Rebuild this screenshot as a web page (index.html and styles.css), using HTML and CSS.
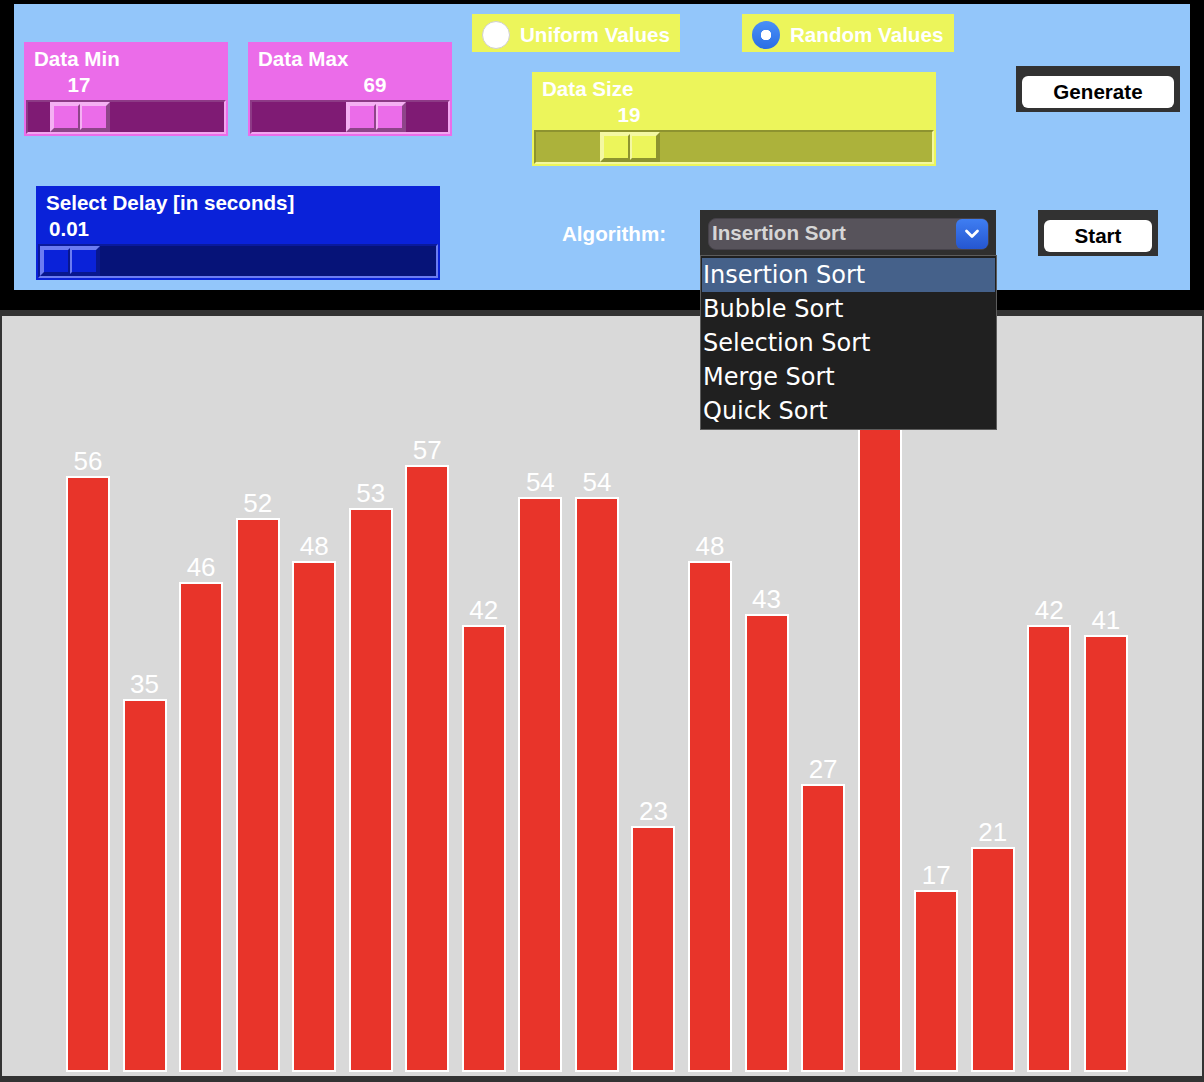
FILE: index.html
```html
<!DOCTYPE html>
<html lang="en">
<head>
<meta charset="utf-8">
<title>Sorting Visualizer</title>
<link rel="stylesheet" href="styles.css">
</head>
<body>
<div class="panel">
  <div class="col col-a">
    <div class="scale-row">
      <div class="scale magenta" style="--pos: 22px">
        <div class="scale-label">Data Min</div>
        <div class="scale-value">17</div>
        <div class="trough narrow"><div class="thumb"><span></span><span></span></div></div>
      </div>
      <div class="scale magenta" style="--pos: 94px">
        <div class="scale-label">Data Max</div>
        <div class="scale-value">69</div>
        <div class="trough narrow"><div class="thumb"><span></span><span></span></div></div>
      </div>
    </div>
    <div class="scale blue delay" style="--pos: 0px">
      <div class="scale-label">Select Delay [in seconds]</div>
      <div class="scale-value">0.01</div>
      <div class="trough wide"><div class="thumb"><span></span><span></span></div></div>
    </div>
  </div>

  <div class="col col-b">
    <div class="radio-row">
      <div class="radio uniform"><span class="dot"></span><span>Uniform Values</span></div>
      <div class="radio random"><span class="dot checked"></span><span>Random Values</span></div>
    </div>
    <div class="scale yellow size" style="--pos: 64px">
      <div class="scale-label">Data Size</div>
      <div class="scale-value">19</div>
      <div class="trough wide"><div class="thumb"><span></span><span></span></div></div>
    </div>
    <div class="algo-row">
      <div class="algo-label">Algorithm:</div>
      <div class="combo-frame">
        <div class="combo">
          <span class="combo-text">Insertion Sort</span>
          <span class="combo-btn"><svg width="16" height="10" viewBox="0 0 16 10"><polyline points="2.5,2 8,7.5 13.5,2" fill="none" stroke="#fff" stroke-width="2.8" stroke-linecap="round" stroke-linejoin="round"/></svg></span>
        </div>
        <ul class="menu">
          <li class="active">Insertion Sort</li>
          <li>Bubble Sort</li>
          <li>Selection Sort</li>
          <li>Merge Sort</li>
          <li>Quick Sort</li>
        </ul>
      </div>
    </div>
  </div>

  <div class="col col-c">
    <div class="btn-frame generate"><div class="btn">Generate</div></div>
    <div class="btn-frame start"><div class="btn">Start</div></div>
  </div>
</div>

<div class="canvas">
  <div class="bars">
    <div class="bar-col"><div class="bar-label">56</div><div class="bar" style="height:596px"></div></div>
    <div class="bar-col"><div class="bar-label">35</div><div class="bar" style="height:373px"></div></div>
    <div class="bar-col"><div class="bar-label">46</div><div class="bar" style="height:490px"></div></div>
    <div class="bar-col"><div class="bar-label">52</div><div class="bar" style="height:554px"></div></div>
    <div class="bar-col"><div class="bar-label">48</div><div class="bar" style="height:511px"></div></div>
    <div class="bar-col"><div class="bar-label">53</div><div class="bar" style="height:564px"></div></div>
    <div class="bar-col"><div class="bar-label">57</div><div class="bar" style="height:607px"></div></div>
    <div class="bar-col"><div class="bar-label">42</div><div class="bar" style="height:447px"></div></div>
    <div class="bar-col"><div class="bar-label">54</div><div class="bar" style="height:575px"></div></div>
    <div class="bar-col"><div class="bar-label">54</div><div class="bar" style="height:575px"></div></div>
    <div class="bar-col"><div class="bar-label">23</div><div class="bar" style="height:246px"></div></div>
    <div class="bar-col"><div class="bar-label">48</div><div class="bar" style="height:511px"></div></div>
    <div class="bar-col"><div class="bar-label">43</div><div class="bar" style="height:458px"></div></div>
    <div class="bar-col"><div class="bar-label">27</div><div class="bar" style="height:288px"></div></div>
    <div class="bar-col"><div class="bar-label">69</div><div class="bar" style="height:734px"></div></div>
    <div class="bar-col"><div class="bar-label">17</div><div class="bar" style="height:182px"></div></div>
    <div class="bar-col"><div class="bar-label">21</div><div class="bar" style="height:225px"></div></div>
    <div class="bar-col"><div class="bar-label">42</div><div class="bar" style="height:447px"></div></div>
    <div class="bar-col"><div class="bar-label">41</div><div class="bar" style="height:437px"></div></div>
  </div>
</div>
</body>
</html>
```

FILE: styles.css
```css
* { box-sizing: border-box; }

html, body {
  margin: 0;
  padding: 0;
  background: #000;
  width: 1204px;
  height: 1082px;
  overflow: hidden;
  font-family: "Liberation Sans", Arial, sans-serif;
}

.panel {
  margin: 4px 14px 0;
  width: 1176px;
  height: 286px;
  background: #93c6fa;
  display: flex;
  gap: 20px;
  padding-left: 10px;
  color: #fff;
  font-weight: bold;
  font-size: 20.6px;
}

.col { display: flex; flex-direction: column; }
.col-a { width: 428px; }
.col-b { width: 524px; }
.col-c { width: 164px; }

.scale-row {
  display: flex;
  gap: 20px;
  margin-top: 38px;
}

/* ---------- Tk style scale ---------- */
.scale {
  width: 204px;
  height: 94px;
  padding: 4px 2px 2px;
  display: flex;
  flex-direction: column;
}
.scale.delay { width: 404px; margin-top: 50px; margin-left: 12px; }
.scale.size { width: 404px; margin-top: 20px; margin-left: 60px; }

.scale-label {
  height: 26px;
  line-height: 26px;
  padding-left: 8px;
  white-space: nowrap;
}
.scale-value {
  height: 26px;
  line-height: 26px;
  width: 60px;
  margin-left: calc(var(--pos) + 1px);
  text-align: center;
  white-space: nowrap;
}
.trough {
  margin-top: 2px;
  height: 34px;
  border: 2px solid;
  display: flex;
}
.trough.narrow { width: 200px; }
.trough.wide { width: 400px; }

.thumb {
  width: 60px;
  height: 30px;
  margin-left: var(--pos);
  border: 2px solid;
  display: flex;
}
.thumb span {
  flex: 1;
  border: 2px solid;
}

.magenta { background: #eb6ce9; }
.magenta .trough { background: #7f1b74; border-color: #8d3a86 #f3a6f1 #f3a6f1 #8d3a86; }
.magenta .thumb,
.magenta .thumb span { border-color: #f5b0f3 #8e4489 #8e4489 #f5b0f3; background: #eb6ce9; }

.blue { background: #0a22d9; }
.blue .trough { background: #061378; border-color: #0a1a9c #6c7cf2 #6c7cf2 #0a1a9c; }
.blue .thumb,
.blue .thumb span { border-color: #6c7cf2 #08178f #08178f #6c7cf2; background: #0a22d9; }

.yellow { background: #ecf55b; }
.yellow .trough { background: #acb23b; border-color: #8d932f #f4f89e #f4f89e #8d932f; }
.yellow .thumb,
.yellow .thumb span { border-color: #f4f8a2 #8d932f #8d932f #f4f8a2; background: #ecf55b; }

/* ---------- radios ---------- */
.radio-row {
  display: flex;
  gap: 62px;
  margin-top: 10px;
}
.radio {
  height: 38px;
  background: #ecf55b;
  display: flex;
  align-items: center;
  gap: 10px;
  padding: 4px 9px 0 10px;
  white-space: nowrap;
}
.radio.uniform { width: 208px; }
.radio.random { width: 212px; }
.dot {
  width: 28px;
  height: 28px;
  border-radius: 50%;
  background: #fff;
  border: 1px solid #cfcfcf;
  flex: none;
}
.dot.checked {
  border: none;
  background: radial-gradient(circle, #fff 0 5px, transparent 5.5px),
              linear-gradient(#4a90f8, #2a6ee4);
}

/* ---------- algorithm combo ---------- */
.algo-row {
  margin-top: 44px;
  display: flex;
  align-items: center;
  height: 45px;
}
.algo-label {
  margin-left: 90px;
  width: 138px;
  padding-top: 2px;
}
.combo-frame {
  position: relative;
  width: 296px;
  height: 45px;
  background: #2f2f2f;
  padding: 8px 7px 5px 8px;
}
.combo {
  height: 32px;
  border-radius: 8px;
  background: #57535b;
  border: 1px solid #46424a;
  display: flex;
  align-items: center;
  justify-content: space-between;
  padding-left: 3px;
}
.combo-text {
  color: #d6d6d6;
  font-size: 20.6px;
  padding-bottom: 2px;
}
.combo-btn {
  width: 32px;
  height: 30px;
  border-radius: 6px;
  background: linear-gradient(#3f7ef2, #2556d0);
  display: flex;
  align-items: center;
  justify-content: center;
}
.menu {
  position: absolute;
  top: 45px;
  left: 0;
  width: 297px;
  margin: 0;
  padding: 2px 1px 1px;
  list-style: none;
  background: #202020;
  border: 1px solid #5c5c5c;
  z-index: 10;
  font-family: "DejaVu Sans", "Liberation Sans", sans-serif;
  font-weight: normal;
  font-size: 24px;
  color: #fff;
}
.menu li {
  height: 34px;
  line-height: 34px;
  padding-left: 1px;
  white-space: nowrap;
}
.menu li.active { background: #45618a; }

/* ---------- buttons ---------- */
.btn-frame {
  background: #323232;
  padding: 10px 6px 4px;
  height: 46px;
}
.btn-frame.generate { width: 164px; margin-top: 62px; }
.btn-frame.start { width: 120px; margin-top: 98px; margin-left: 22px; }
.btn {
  height: 32px;
  border-radius: 6px;
  background: #fff;
  color: #000;
  display: flex;
  align-items: center;
  justify-content: center;
}

/* ---------- chart ---------- */
.canvas {
  margin-top: 20px;
  width: 1204px;
  height: 772px;
  border-style: solid;
  border-color: #333;
  border-width: 6px 2px;
  background: #d9d9d9;
  overflow: hidden;
}
.bars {
  height: 100%;
  display: flex;
  align-items: flex-end;
  gap: 12.56px;
  padding: 0 0 4px 64px;
}
.bar-col {
  width: 44px;
  display: flex;
  flex-direction: column;
  align-items: center;
}
.bar-label {
  font-size: 26px;
  line-height: 26px;
  margin-bottom: 2px;
  color: #fff;
  white-space: nowrap;
}
.bar {
  width: 44px;
  border: 2px solid #fff;
  background: #e8342a;
}
```
